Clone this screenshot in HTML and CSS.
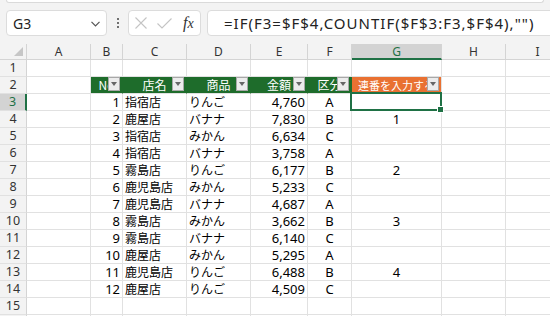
FILE: index.html
```html
<!DOCTYPE html>
<html lang="ja">
<head>
<meta charset="utf-8">
<link rel="stylesheet" href="styles.css">
</head>
<body>
<div class="app">
  <div class="ribbon-edge"></div>
  <div class="fbar">
    <div class="namebox">
      <span>G3</span>
      <svg class="chev" width="9" height="6" viewBox="0 0 9 6"><polyline points="0.5,0.8 4.5,4.8 8.5,0.8" fill="none" stroke="#555" stroke-width="1.2"/></svg>
    </div>
    <div class="dots"><i></i><i></i><i></i></div>
    <div class="fxbox">
      <svg width="12" height="12" viewBox="0 0 12 12"><path d="M0.5 0.5 L11.5 11.5 M11.5 0.5 L0.5 11.5" stroke="#c4c4c4" stroke-width="1.1" fill="none"/></svg>
      <svg width="15" height="11" viewBox="0 0 15 11"><polyline points="0.5,5.5 5,10 14.5,0.5" stroke="#c4c4c4" stroke-width="1.1" fill="none"/></svg>
      <span class="fx">f<span class="fxx">x</span></span>
    </div>
    <div class="formula">=IF(F3=$F$4,COUNTIF($F$3:F3,$F$4),"")</div>
  </div>
  <div class="sheet">
    <div class="c ch corner"><svg width="9" height="9" viewBox="0 0 9 9"><polygon points="9,0 9,9 0,9" fill="#c6c6c6"/></svg></div>
    <div class="c ch">A</div><div class="c ch">B</div><div class="c ch">C</div><div class="c ch">D</div><div class="c ch">E</div><div class="c ch">F</div><div class="c ch sel">G</div><div class="c ch">H</div><div class="c ch">I</div>

    <div class="c rh">1</div><div class="c"></div><div class="c"></div><div class="c"></div><div class="c"></div><div class="c"></div><div class="c"></div><div class="c"></div><div class="c"></div><div class="c"></div>

    <div class="c rh">2</div><div class="c"></div>
    <div class="c th">No<span class="fbtn"></span></div>
    <div class="c th">店名<span class="fbtn"></span></div>
    <div class="c th">商品<span class="fbtn"></span></div>
    <div class="c th">金額<span class="fbtn"></span></div>
    <div class="c th">区分<span class="fbtn"></span></div>
    <div class="c th or">連番を入力する<span class="fbtn"></span></div>
    <div class="c"></div><div class="c"></div>

    <div class="c rh sel">3</div><div class="c"></div><div class="c r">1</div><div class="c jp">指宿店</div><div class="c jp">りんご</div><div class="c r">4,760</div><div class="c ctr">A</div><div class="c ctr selcell"><span class="selbox"><span class="handle"></span></span></div><div class="c"></div><div class="c"></div>

    <div class="c rh">4</div><div class="c"></div><div class="c r">2</div><div class="c jp">鹿屋店</div><div class="c jp">バナナ</div><div class="c r">7,830</div><div class="c ctr">B</div><div class="c ctr">1</div><div class="c"></div><div class="c"></div>

    <div class="c rh">5</div><div class="c"></div><div class="c r">3</div><div class="c jp">指宿店</div><div class="c jp">みかん</div><div class="c r">6,634</div><div class="c ctr">C</div><div class="c ctr"></div><div class="c"></div><div class="c"></div>

    <div class="c rh">6</div><div class="c"></div><div class="c r">4</div><div class="c jp">指宿店</div><div class="c jp">バナナ</div><div class="c r">3,758</div><div class="c ctr">A</div><div class="c ctr"></div><div class="c"></div><div class="c"></div>

    <div class="c rh">7</div><div class="c"></div><div class="c r">5</div><div class="c jp">霧島店</div><div class="c jp">りんご</div><div class="c r">6,177</div><div class="c ctr">B</div><div class="c ctr">2</div><div class="c"></div><div class="c"></div>

    <div class="c rh">8</div><div class="c"></div><div class="c r">6</div><div class="c jp">鹿児島店</div><div class="c jp">みかん</div><div class="c r">5,233</div><div class="c ctr">C</div><div class="c ctr"></div><div class="c"></div><div class="c"></div>

    <div class="c rh">9</div><div class="c"></div><div class="c r">7</div><div class="c jp">鹿児島店</div><div class="c jp">バナナ</div><div class="c r">4,687</div><div class="c ctr">A</div><div class="c ctr"></div><div class="c"></div><div class="c"></div>

    <div class="c rh">10</div><div class="c"></div><div class="c r">8</div><div class="c jp">霧島店</div><div class="c jp">みかん</div><div class="c r">3,662</div><div class="c ctr">B</div><div class="c ctr">3</div><div class="c"></div><div class="c"></div>

    <div class="c rh">11</div><div class="c"></div><div class="c r">9</div><div class="c jp">霧島店</div><div class="c jp">バナナ</div><div class="c r">6,140</div><div class="c ctr">C</div><div class="c ctr"></div><div class="c"></div><div class="c"></div>

    <div class="c rh">12</div><div class="c"></div><div class="c r">10</div><div class="c jp">鹿屋店</div><div class="c jp">みかん</div><div class="c r">5,295</div><div class="c ctr">A</div><div class="c ctr"></div><div class="c"></div><div class="c"></div>

    <div class="c rh">13</div><div class="c"></div><div class="c r">11</div><div class="c jp">鹿児島店</div><div class="c jp">りんご</div><div class="c r">6,488</div><div class="c ctr">B</div><div class="c ctr">4</div><div class="c"></div><div class="c"></div>

    <div class="c rh">14</div><div class="c"></div><div class="c r">12</div><div class="c jp">鹿屋店</div><div class="c jp">りんご</div><div class="c r">4,509</div><div class="c ctr">C</div><div class="c ctr"></div><div class="c"></div><div class="c"></div>

    <div class="c rh">15</div><div class="c"></div><div class="c"></div><div class="c"></div><div class="c"></div><div class="c"></div><div class="c"></div><div class="c"></div><div class="c"></div><div class="c"></div>

    <div class="c rh"></div><div class="c"></div><div class="c"></div><div class="c"></div><div class="c"></div><div class="c"></div><div class="c"></div><div class="c"></div><div class="c"></div><div class="c"></div>
  </div>
</div>
</body>
</html>
```

FILE: styles.css
```css
html, body {
  margin: 0;
  padding: 0;
  width: 550px;
  height: 316px;
  overflow: hidden;
  background: #f3f3f3;
  font-family: "Noto Sans", "Noto Sans CJK JP", sans-serif;
}

.app {
  width: 550px;
  height: 316px;
  overflow: hidden;
}

.ribbon-edge {
  height: 2px;
  margin: 0 6px;
  background: #fff;
  border: 1px solid #dadada;
  border-top: 0;
  border-radius: 0 0 6px 6px;
}

.fbar {
  display: flex;
  height: 26px;
  margin-top: 7px;
  padding-left: 6px;
}

.namebox {
  width: 101px;
  box-sizing: border-box;
  border: 1px solid #dcdcdc;
  border-radius: 4px;
  background: #fff;
  display: flex;
  align-items: center;
  justify-content: space-between;
  padding: 0 6px 0 6px;
  font-size: 14px;
  color: #222;
}

.chev {
  margin-top: 1px;
}

.dots {
  width: 21px;
  display: flex;
  flex-direction: column;
  align-items: center;
  justify-content: center;
  gap: 2px;
}

.dots i {
  display: block;
  width: 2px;
  height: 2px;
  background: #444;
  border-radius: 1px;
}

.fxbox {
  width: 73px;
  box-sizing: border-box;
  border: 1px solid #dcdcdc;
  border-radius: 4px;
  background: #fff;
  display: flex;
  align-items: center;
  gap: 10px;
  padding-left: 6px;
}

.fx {
  font-family: "Liberation Serif", serif;
  font-style: italic;
  font-size: 16px;
  color: #333;
  margin-left: 1px;
}

.fxx {
  font-size: 14px;
}

.formula {
  flex: 1;
  margin-left: 6px;
  margin-right: -6px;
  box-sizing: border-box;
  border: 1px solid #dcdcdc;
  border-radius: 4px;
  background: #fff;
  display: flex;
  align-items: center;
  padding-left: 16px;
  font-size: 15px;
  letter-spacing: 1px;
  color: #222;
  white-space: nowrap;
  overflow: hidden;
}

.sheet {
  display: grid;
  grid-template-columns: 27px 64px 32px 64px 64px 57px 44px 90px 64px 64px;
  grid-template-rows: 16px;
  grid-auto-rows: 17px;
  margin-top: 8px;
  background: #fff;
  width: 570px;
}

.c {
  position: relative;
  box-sizing: border-box;
  border-right: 1px solid #e1e1e1;
  border-bottom: 1px solid #e1e1e1;
  font-size: 13px;
  line-height: 16px;
  white-space: nowrap;
  overflow: hidden;
  padding: 0 2px;
  color: #000;
}

.r { text-align: right; }
.ctr { text-align: center; }

.jp {
  font-family: "Noto Sans CJK JP", sans-serif;
  font-size: 12px;
  padding-left: 2px;
}

.ch {
  background: #f3f3f3;
  border-right-color: #d4d4d4;
  border-bottom-color: #d4d4d4;
  text-align: center;
  font-size: 12px;
  line-height: 15px;
  color: #333;
}

.ch.sel {
  background: #d3d3d3;
  color: #1f7145;
  border-bottom: 2px solid #1f7145;
  overflow: visible;
}

.corner {
  display: flex;
  align-items: flex-end;
  justify-content: flex-end;
  padding: 0 3px 3px 0;
}

.corner svg { display: block; }

.rh {
  background: #f3f3f3;
  border-right-color: #d4d4d4;
  border-bottom-color: #e1e1e1;
  text-align: center;
  font-size: 12.5px;
  color: #333;
  padding: 0;
}

.rh.sel {
  background: #d3d3d3;
  color: #1f7145;
  border-right: 2px solid #1f7145;
}

.th {
  background: #1e6c2b;
  border-right-color: #1e6c2b;
  color: #fff;
  text-align: center;
  font-family: "Noto Sans CJK JP", sans-serif;
  font-size: 12px;
  line-height: 16px;
  overflow: visible;
}

.th.or {
  background: #e97132;
  border-right-color: #e1e1e1;
  font-size: 11px;
  text-align: left;
  padding-left: 6px;
  overflow: hidden;
}

.fbtn {
  position: absolute;
  right: 2px;
  top: 0;
  width: 12px;
  height: 14px;
  box-sizing: border-box;
  background: #ececec;
  border: 1px solid #a8a8a8;
}

.fbtn::after {
  content: "";
  position: absolute;
  left: 2px;
  top: 4px;
  border-left: 3px solid transparent;
  border-right: 3px solid transparent;
  border-top: 4px solid #666;
}

.selcell {
  overflow: visible;
}

.selbox {
  position: absolute;
  left: -2px;
  top: -2px;
  right: -1px;
  bottom: -1px;
  border: 2px solid #1f7145;
  z-index: 2;
}

.handle {
  position: absolute;
  right: -4px;
  bottom: -4px;
  width: 5px;
  height: 5px;
  background: #1f7145;
  border: 1px solid #fff;
}
```
